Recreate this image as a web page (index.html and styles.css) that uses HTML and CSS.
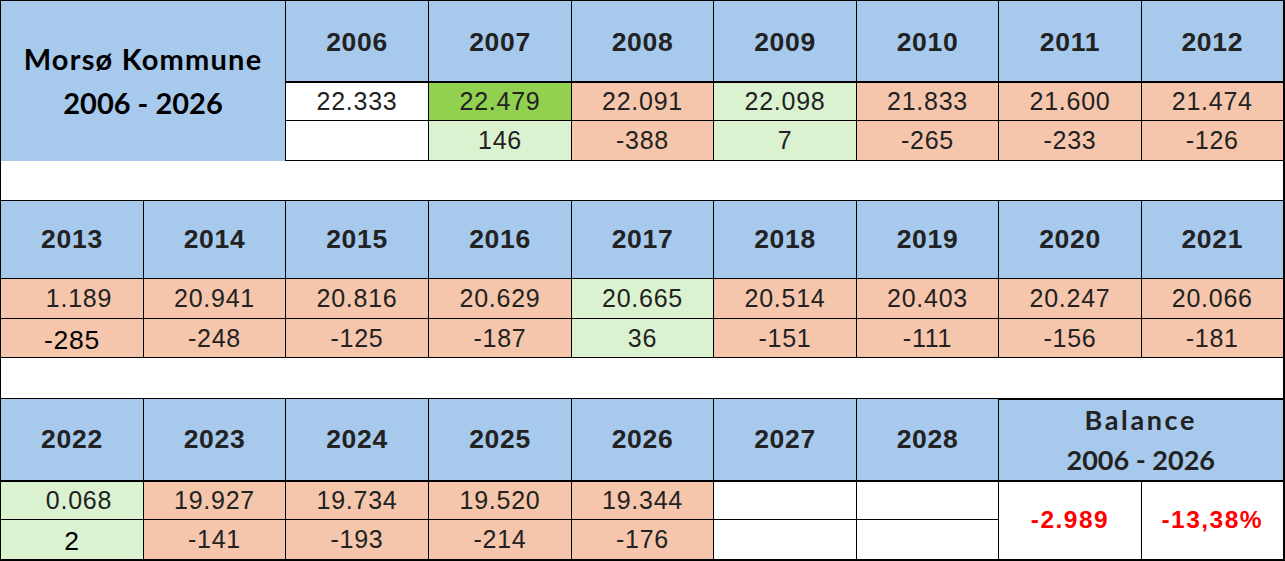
FILE: index.html
```html
<!DOCTYPE html>
<html lang="da">
<head>
<meta charset="utf-8">
<title>Morsø Kommune 2006 - 2026</title>
<link rel="stylesheet" href="styles.css">
</head>
<body>
<table class="sheet">
  <colgroup>
    <col class="c143"><col class="c142"><col class="c143"><col class="c143"><col class="c142"><col class="c143"><col class="c142"><col class="c143"><col class="c142">
  </colgroup>
  <tbody>
    <tr class="r-head1">
      <td class="title" colspan="2" rowspan="3"><div class="title-l words">Morsø Kommune</div><div class="title-l">2006 - 2026</div></td>
      <td class="yr thick-b">2006</td>
      <td class="yr thick-b">2007</td>
      <td class="yr thick-b">2008</td>
      <td class="yr thick-b">2009</td>
      <td class="yr thick-b">2010</td>
      <td class="yr thick-b">2011</td>
      <td class="yr thick-b">2012</td>
    </tr>
    <tr class="r-39">
      <td class="v white">22.333</td>
      <td class="v bright">22.479</td>
      <td class="v red">22.091</td>
      <td class="v green">22.098</td>
      <td class="v red">21.833</td>
      <td class="v red">21.600</td>
      <td class="v red">21.474</td>
    </tr>
    <tr class="r-40">
      <td class="v white"></td>
      <td class="v green">146</td>
      <td class="v red">-388</td>
      <td class="v green">7</td>
      <td class="v red">-265</td>
      <td class="v red">-233</td>
      <td class="v red">-126</td>
    </tr>
    <tr class="r-blank1"><td class="blank" colspan="9"></td></tr>
    <tr class="r-head2">
      <td class="yr">2013</td>
      <td class="yr">2014</td>
      <td class="yr">2015</td>
      <td class="yr">2016</td>
      <td class="yr">2017</td>
      <td class="yr">2018</td>
      <td class="yr">2019</td>
      <td class="yr">2020</td>
      <td class="yr">2021</td>
    </tr>
    <tr class="r-40">
      <td class="v red shift">1.189</td>
      <td class="v red">20.941</td>
      <td class="v red">20.816</td>
      <td class="v red">20.629</td>
      <td class="v green">20.665</td>
      <td class="v red">20.514</td>
      <td class="v red">20.403</td>
      <td class="v red">20.247</td>
      <td class="v red">20.066</td>
    </tr>
    <tr class="r-39">
      <td class="v red blk">-285</td>
      <td class="v red">-248</td>
      <td class="v red">-125</td>
      <td class="v red">-187</td>
      <td class="v green">36</td>
      <td class="v red">-151</td>
      <td class="v red">-111</td>
      <td class="v red">-156</td>
      <td class="v red">-181</td>
    </tr>
    <tr class="r-blank2"><td class="blank" colspan="9"></td></tr>
    <tr class="r-head3">
      <td class="yr thick-b">2022</td>
      <td class="yr thick-b">2023</td>
      <td class="yr thick-b">2024</td>
      <td class="yr thick-b">2025</td>
      <td class="yr thick-b">2026</td>
      <td class="yr thick-b">2027</td>
      <td class="yr thick-b">2028</td>
      <td class="balance" colspan="2"><div class="bal-l words">Balance</div><div class="bal-l">2006 - 2026</div></td>
    </tr>
    <tr class="r-39">
      <td class="v green shift">0.068</td>
      <td class="v red">19.927</td>
      <td class="v red">19.734</td>
      <td class="v red">19.520</td>
      <td class="v red">19.344</td>
      <td class="v white"></td>
      <td class="v white"></td>
      <td class="sum" rowspan="2">-2.989</td>
      <td class="sum" rowspan="2">-13,38%</td>
    </tr>
    <tr class="r-40">
      <td class="v green blk">2</td>
      <td class="v red">-141</td>
      <td class="v red">-193</td>
      <td class="v red">-214</td>
      <td class="v red">-176</td>
      <td class="v white"></td>
      <td class="v white"></td>
    </tr>
  </tbody>
</table>
</body>
</html>
```
FILE: styles.css
```css
html, body {
  margin: 0;
  padding: 0;
  background: #ffffff;
}

.sheet {
  border-collapse: collapse;
  table-layout: fixed;
  width: 1283px;
  border-top: 1px solid #000;
  border-left: 1px solid #000;
  border-right: 2px solid #000;
  border-bottom: 2px solid #000;
  font-family: "Liberation Sans", Arial, sans-serif;
  color: #222;
}

.c143 { width: 143px; }
.c142 { width: 142px; }

.sheet td {
  border: 1px solid #000;
  padding: 0;
  text-align: center;
  vertical-align: middle;
  overflow: hidden;
  white-space: nowrap;
}

.r-head1 { height: 81px; }
.r-39 { height: 39px; }
.r-40 { height: 40px; }
.r-blank1 { height: 40px; }
.r-head2 { height: 78px; }
.r-blank2 { height: 41px; }
.r-head3 { height: 79px; }

.title {
  background: #a6c9ec;
  border-bottom: none !important;
  font-family: Lato, "Liberation Sans", sans-serif;
  font-weight: 700;
  font-size: 29px;
  line-height: 43.6px;
  color: #000;
}

.title .words { letter-spacing: 1.2px; }

.yr {
  background: #a6c9ec;
  font-weight: 700;
  font-size: 26.5px;
  letter-spacing: 0.7px;
}

.r-head1 .yr { padding-top: 4px; }

.thick-b { border-bottom: 2px solid #000 !important; }

.v {
  font-size: 25px;
  letter-spacing: 0.75px;
}

.white { background: #ffffff; }
.bright { background: #92d050; }
.red { background: #f5c6ab; }
.green { background: #daf2d0; }

.shift { padding-left: 14px !important; }

.blk {
  color: #000;
  font-size: 26.5px;
  padding-top: 4px !important;
}

.blank {
  background: #ffffff;
  border-top: none !important;
}

.r-blank2 .blank { border-top: 1px solid #000 !important; }

.balance {
  background: #a6c9ec;
  border-top: 2px solid #000 !important;
  border-bottom: 2px solid #000 !important;
  font-family: Lato, "Liberation Sans", sans-serif;
  font-weight: 700;
  font-size: 27px;
  line-height: 40px;
}

.balance .words { letter-spacing: 2.6px; }

.sum {
  background: #ffffff;
  color: #ff0000;
  font-weight: 700;
  font-size: 24.5px;
  letter-spacing: 1.5px;
}
```
